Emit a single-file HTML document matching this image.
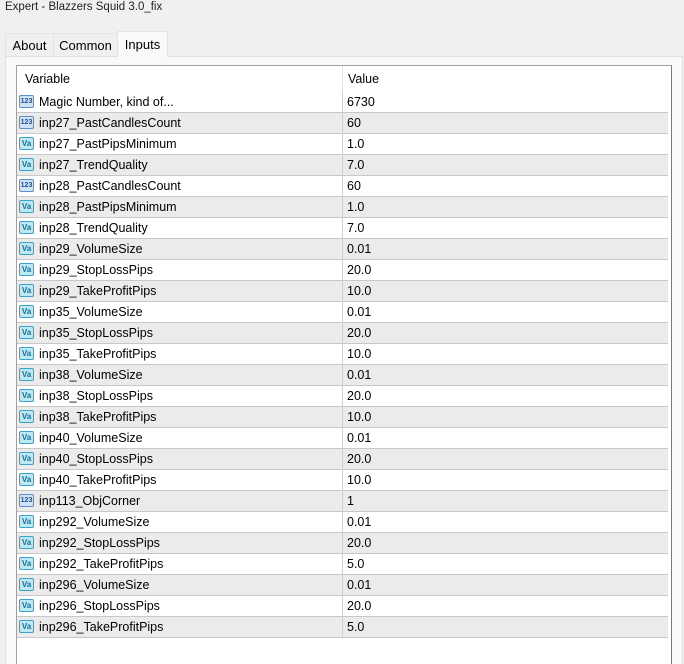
<!DOCTYPE html>
<html style="overflow:hidden;height:664px"><head><style>
body{margin:0;width:684px;height:664px;background:#f0f0f0;font-family:"Liberation Sans",sans-serif;font-size:12px;color:#000;position:relative;overflow:hidden}
.title{position:absolute;left:5px;top:1px;font-size:11.5px;color:#222}
.tab{position:absolute;top:33px;height:23px;line-height:23px;text-align:center;font-size:13px;background:#f0f0f0;border:1px solid #e4e4e4;border-bottom:none;box-sizing:border-box}
.panel{position:absolute;left:5px;top:56px;width:678px;height:620px;background:#f9f9f9;border:1px solid #e2e2e2;box-sizing:border-box}
.box{position:absolute;left:16px;top:65px;width:656px;height:620px;background:#fff;border:1px solid #a0a0a0;border-right:1px solid #7a7a7a;box-sizing:border-box}
.row{position:absolute;left:0;width:651px;height:21px;box-sizing:border-box;border-bottom:1px solid #c8c8c8}
.row.g{background:#ebebeb}
.c1{position:absolute;left:22px;top:3px;font-size:12.5px}
.c2{position:absolute;left:330px;top:3px;font-size:12.5px}
.div{position:absolute;left:325px;top:0;width:1px;height:21px;background:#cfcfcf}
.ic{position:absolute;left:2px;top:3px;width:15px;height:13px;border:1px solid #5a8fc8;border-radius:2px;box-sizing:border-box;font-size:7px;line-height:11px;text-align:center;font-weight:bold;color:#1d4f9a;background:#cfe3f7}
.ic.v{border-color:#3aa3c7;background:#bde9f7;color:#1a6f93;font-size:8px}
</style></head><body>
<div class="title">Expert - Blazzers Squid 3.0_fix</div>
<div class="panel"></div>
<div class="tab" style="left:5px;width:49px">About</div>
<div class="tab" style="left:53px;width:65px">Common</div>
<div class="tab" style="left:117px;top:31px;height:26px;width:51px;background:#f9f9f9;line-height:25px">Inputs</div>
<div class="box">
<div style="position:absolute;left:8px;top:6px;font-size:12.5px">Variable</div>
<div style="position:absolute;left:325px;top:0;width:1px;height:26px;background:#e0e0e0"></div>
<div style="position:absolute;left:331px;top:6px;font-size:12.5px">Value</div>
<div id="rows"></div>
</div>
<script>
var d=[["i","Magic Number, kind of...","6730"],["i","inp27_PastCandlesCount","60"],["v","inp27_PastPipsMinimum","1.0"],["v","inp27_TrendQuality","7.0"],["i","inp28_PastCandlesCount","60"],["v","inp28_PastPipsMinimum","1.0"],["v","inp28_TrendQuality","7.0"],["v","inp29_VolumeSize","0.01"],["v","inp29_StopLossPips","20.0"],["v","inp29_TakeProfitPips","10.0"],["v","inp35_VolumeSize","0.01"],["v","inp35_StopLossPips","20.0"],["v","inp35_TakeProfitPips","10.0"],["v","inp38_VolumeSize","0.01"],["v","inp38_StopLossPips","20.0"],["v","inp38_TakeProfitPips","10.0"],["v","inp40_VolumeSize","0.01"],["v","inp40_StopLossPips","20.0"],["v","inp40_TakeProfitPips","10.0"],["i","inp113_ObjCorner","1"],["v","inp292_VolumeSize","0.01"],["v","inp292_StopLossPips","20.0"],["v","inp292_TakeProfitPips","5.0"],["v","inp296_VolumeSize","0.01"],["v","inp296_StopLossPips","20.0"],["v","inp296_TakeProfitPips","5.0"]];
var h="";d.forEach(function(r,i){h+='<div class="row'+(i%2?' g':'')+'" style="top:'+(26+i*21)+'px"><div class="ic'+(r[0]=="v"?' v':'')+'">'+(r[0]=="v"?'Va':'123')+'</div><div class="c1">'+r[1]+'</div><div class="div"></div><div class="c2">'+r[2]+'</div></div>';});
document.getElementById("rows").innerHTML=h;
</script>
</body></html>
